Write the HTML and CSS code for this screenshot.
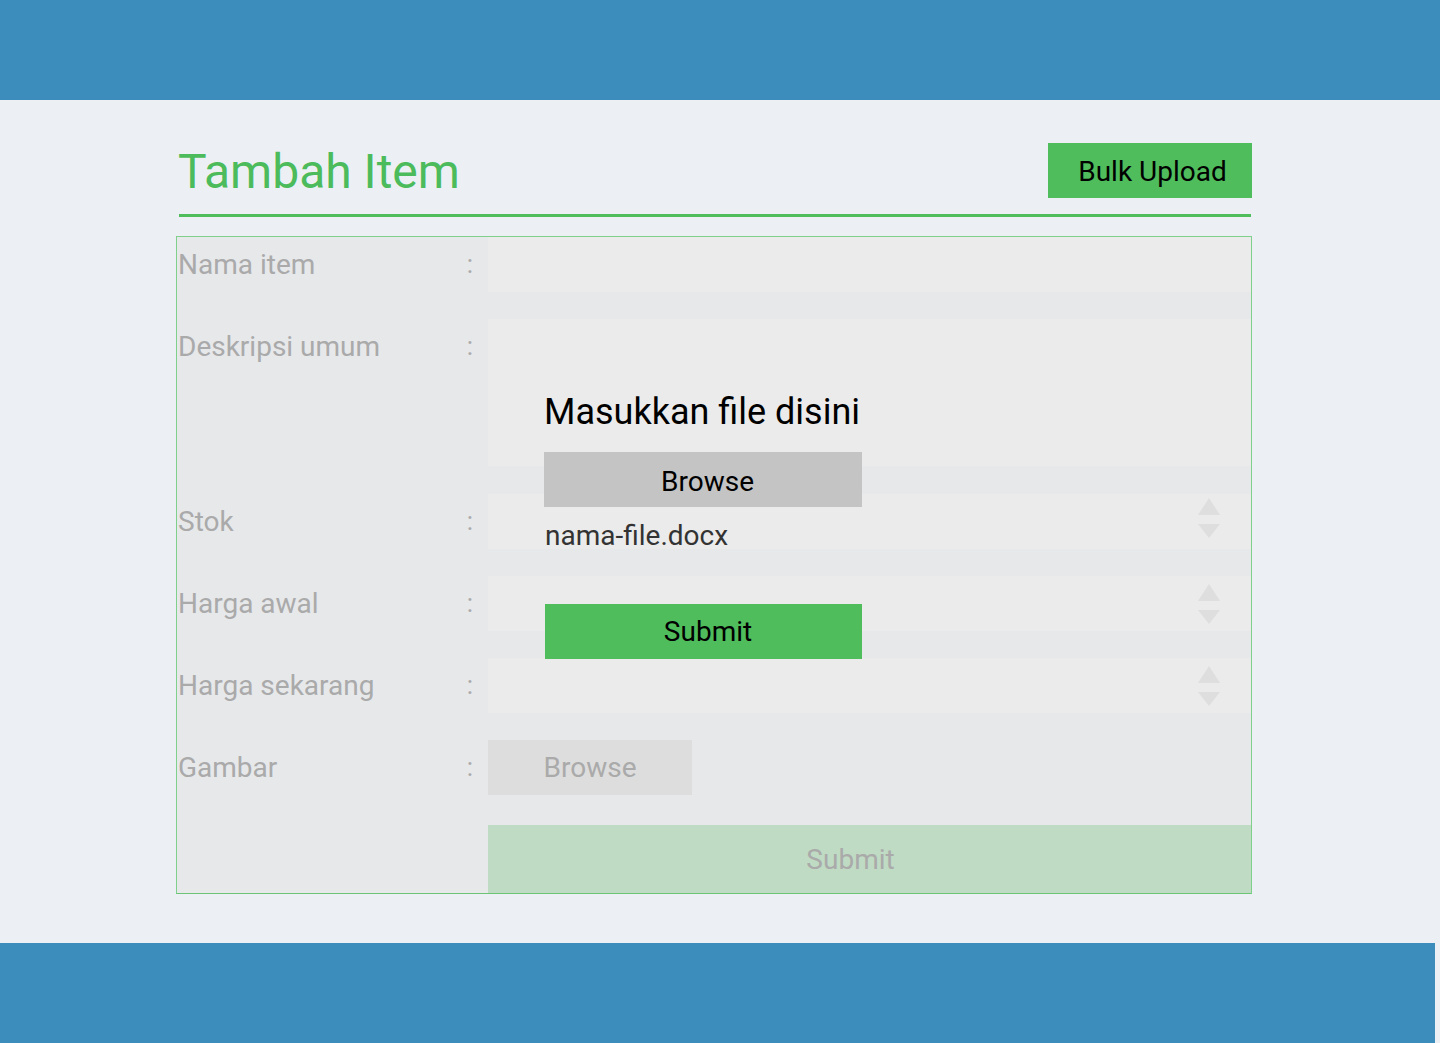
FILE: index.html
```html
<!DOCTYPE html>
<html lang="id">
<head>
<meta charset="utf-8">
<title>Tambah Item</title>
<link rel="stylesheet" href="styles.css">
</head>
<body>
<header class="topbar"></header>
<main class="page">
  <div class="container">
    <div class="title-row">
      <h1 class="title">Tambah Item</h1>
      <button class="btn-bulk" type="button">Bulk Upload</button>
    </div>
    <div class="form-wrap">
      <form class="item-form">
        <div class="row">
          <label class="label"><span>Nama item</span><span class="colon">:</span></label>
          <div class="field input"></div>
        </div>
        <div class="row">
          <label class="label"><span>Deskripsi umum</span><span class="colon">:</span></label>
          <div class="field textarea"></div>
        </div>
        <div class="row row-stok">
          <label class="label"><span>Stok</span><span class="colon">:</span></label>
          <div class="field input number">
            <svg class="spin" width="22" height="40" viewBox="0 0 22 40"><path d="M11 0 L22 17 L0 17 Z M0 26 L22 26 L11 40 Z" fill="#dedede"/></svg>
          </div>
        </div>
        <div class="row">
          <label class="label"><span>Harga awal</span><span class="colon">:</span></label>
          <div class="field input number">
            <svg class="spin spin-low" width="22" height="40" viewBox="0 0 22 40"><path d="M11 0 L22 17 L0 17 Z M0 26 L22 26 L11 40 Z" fill="#dedede"/></svg>
          </div>
        </div>
        <div class="row">
          <label class="label"><span>Harga sekarang</span><span class="colon">:</span></label>
          <div class="field input number">
            <svg class="spin spin-low" width="22" height="40" viewBox="0 0 22 40"><path d="M11 0 L22 17 L0 17 Z M0 26 L22 26 L11 40 Z" fill="#dedede"/></svg>
          </div>
        </div>
        <div class="row">
          <label class="label"><span>Gambar</span><span class="colon">:</span></label>
          <div class="field"><span class="btn-browse-faded">Browse</span></div>
        </div>
        <div class="row submit-row">
          <div class="label"></div>
          <div class="btn-submit-faded">Submit</div>
        </div>
      </form>
      <div class="modal">
        <h2 class="modal-title">Masukkan file disini</h2>
        <button class="modal-browse" type="button">Browse</button>
        <p class="filename">nama-file.docx</p>
        <button class="modal-submit" type="button">Submit</button>
      </div>
    </div>
  </div>
</main>
<footer class="bottombar"></footer>
</body>
</html>
```
FILE: styles.css
```css
* { box-sizing: border-box; }
html, body { margin: 0; padding: 0; }
body {
  background: #ecf0f5;
  font-family: Roboto, "Liberation Sans", Arial, sans-serif;
}
.topbar {
  height: 100px;
  background: #3c8dbc;
}
.page {
  height: 843px;
}
.container {
  width: 1076px;
  margin-left: 176px;
  padding-top: 43px;
}
.title-row {
  display: flex;
  justify-content: space-between;
  align-items: flex-start;
  margin-left: 3px;
  margin-right: 1px;
  height: 74px;
  border-bottom: 3px solid #4fbd5c;
}
.title {
  margin: 0;
  font-weight: 400;
  font-size: 48px;
  line-height: 56px;
  color: #4cbb5c;
  margin-left: -1px;
  padding-top: 1px;
}
.btn-bulk {
  width: 204px;
  height: 55px;
  margin-right: -1px;
  border: 0;
  background: #4fbd5c;
  color: #000;
  font-family: inherit;
  font-size: 28px;
  padding: 2px 0 0 5px;
}
.form-wrap {
  position: relative;
  margin-top: 19px;
}
.item-form {
  border: 1px solid #7fd08a;
  border-bottom-color: #6cc577;
  background: #e7e8ea;
  display: flex;
  flex-direction: column;
  gap: 27px;
}
.row {
  display: flex;
}
.row-stok { margin-top: 1px; }
.label {
  width: 311px;
  flex: none;
  display: flex;
  justify-content: space-between;
  padding-left: 1px;
  padding-right: 15px;
  font-size: 28px;
  line-height: 55px;
  color: #aaaaaa;
  height: 55px;
}
.colon { font-size: 26px; }
.field {
  flex: 1;
  height: 55px;
}
.input {
  background: #ebebeb;
  position: relative;
}
.textarea {
  background: #ebebeb;
  height: 147px;
}
.spin {
  position: absolute;
  right: 31px;
  top: 4px;
}
.spin-low { top: 8px; }
.btn-browse-faded {
  display: flex;
  align-items: center;
  justify-content: center;
  width: 204px;
  height: 55px;
  background: #dddddd;
  color: #aaaaaa;
  font-size: 28px;
}
.submit-row { margin-top: 3px; }
.submit-row .label { height: 68px; }
.btn-submit-faded {
  flex: 1;
  height: 68px;
  background: #bfdbc3;
  color: #aaaaaa;
  font-size: 28px;
  display: flex;
  align-items: center;
  justify-content: center;
  padding-right: 38px;
}
.modal {
  position: absolute;
  left: 368px;
  top: 158px;
  width: 318px;
}
.modal-title {
  margin: 0;
  font-weight: 400;
  font-size: 36px;
  line-height: 36px;
  color: #000;
  white-space: nowrap;
}
.modal-browse {
  display: block;
  margin-top: 22px;
  width: 318px;
  height: 55px;
  border: 0;
  padding: 3px 0 0 9px;
  background: #c4c4c4;
  color: #000;
  font-family: inherit;
  font-size: 28px;
}
.filename {
  margin: 15px 0 0 1px;
  font-size: 28px;
  line-height: 28px;
  color: #333333;
}
.modal-submit {
  display: block;
  margin-top: 54px;
  margin-left: 1px;
  width: 317px;
  height: 55px;
  border: 0;
  padding: 0 0 1px 9px;
  background: #4fbd5c;
  color: #000;
  font-family: inherit;
  font-size: 28px;
}
.bottombar {
  height: 100px;
  width: calc(100% - 5px);
  background: #3c8dbc;
}
```
